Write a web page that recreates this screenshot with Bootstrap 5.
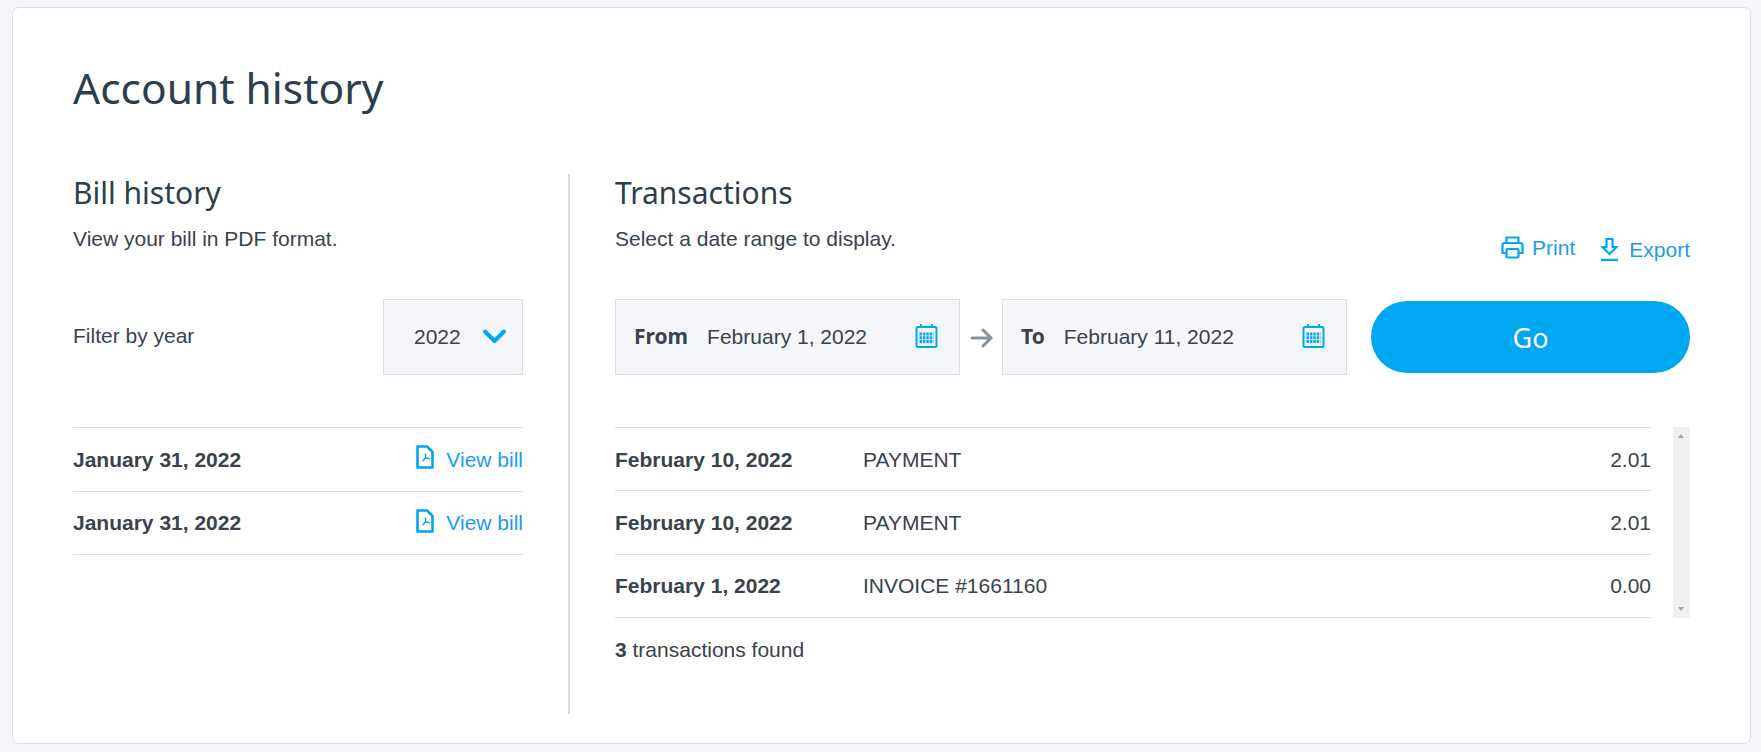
<!DOCTYPE html>
<html lang="en">
<head>
<meta charset="utf-8">
<title>Account history</title>
<link rel="stylesheet" href="https://cdn.jsdelivr.net/npm/bootstrap@5.3.0/dist/css/bootstrap.min.css">
<style>
html,body{height:100%}
body{background:#f3f7fa;font-family:"Liberation Sans",Arial,sans-serif;font-size:21px;line-height:31px;color:#38434d;overflow:hidden}
.shell{margin:7px 10px 9px 12px;height:737px;background:#fff;border:1px solid #d7e0e6;border-radius:7px;padding:0 60px}
.page-title{font-family:"Noto Sans",sans-serif;font-size:42.500px;font-weight:400;color:#2c3e4c;line-height:50px;margin:0;padding-top:55px;height:166px}
.sec-title{font-family:"Noto Sans",sans-serif;font-size:30px;font-weight:400;color:#2c3e4c;line-height:36px;margin:0;padding-top:1px;height:36px}
.sub-row{height:41px;padding-top:17px}
.sec-sub{line-height:24px;margin:0}
.cols{height:540px}
.left-col{width:450px;flex:none}
.divider{width:2px;flex:none;background:#d2dee3;margin:0 45px}
.right-col{flex:1 1 auto;min-width:0}
.filter-row{height:76px;margin-top:48px}
.box{background:#f3f7fa;border:1px solid #d7e0e6;height:76px;padding-bottom:2px}
.year-box{width:140px;padding-left:30px;gap:21px}
.rows{margin-top:52px}
.bill-row{height:63.5px;border-bottom:1px solid #d7e0e6}
.rows-top{border-top:1px solid #d7e0e6}
.lnk{color:#1d9bf0;text-decoration:none}
.date-b{font-weight:700}
.bill-lnk{gap:12px}
.bill-lnk svg{margin-top:-4px}
.tools{gap:26px;margin-top:5px}
.print-lnk{gap:8px}
.export-lnk{gap:11px;margin-top:2px}
.date-box{width:345px;padding:0 21px 2px 18px}
.lbl{font-family:"Noto Sans",sans-serif;font-weight:700;font-size:21px;margin-right:19px;color:#38434d}
.arrow{width:42px;flex:none;padding:2px 0 0 1px}
.go-btn{background:#00a7f1;color:#fff;border:0;border-radius:36px;width:319px;height:72px;font-family:"Noto Sans",sans-serif;font-size:27px;padding:2px 0 0}
.go-btn:hover{background:#00a7f1;color:#fff}
.filter-lbl{margin-top:-3px}
.tx-wrap{margin-top:52px;gap:22px}
.tx-list{flex:1 1 auto;min-width:0}
.tx-row{height:63.300px;border-bottom:1px solid #d7e0e6}
.tx-date{width:248px;font-weight:700}
.tx-desc{flex:1}
.scroll-track{width:17px;flex:none;height:191px;background:#f0f0f0;position:relative}
.scroll-up,.scroll-down{position:absolute;left:5px;width:0;height:0;border-left:3.5px solid transparent;border-right:3.5px solid transparent}
.scroll-up{top:7px;border-bottom:4px solid #a3a3a3}
.scroll-down{bottom:7px;border-top:4px solid #a3a3a3}
.found{margin-top:20px;line-height:24px}
</style>
</head>
<body>
<div class="shell">
  <h1 class="page-title">Account history</h1>
  <div class="cols d-flex">
    <div class="left-col">
      <h2 class="sec-title">Bill history</h2>
      <div class="sub-row"><p class="sec-sub">View your bill in PDF format.</p></div>
      <div class="filter-row d-flex align-items-center justify-content-between">
        <span class="filter-lbl">Filter by year</span>
        <div class="box year-box d-flex align-items-center">
          <span>2022</span>
          <svg width="25" height="17" viewBox="0 0 25 17" fill="none" stroke="#00a7f1" stroke-width="4" stroke-linecap="round" stroke-linejoin="round"><path d="M3 3.500l9.500 9.500 9.500-9.500"/></svg>
        </div>
      </div>
      <div class="rows rows-top">
        <div class="bill-row d-flex align-items-center justify-content-between">
          <span class="date-b">January 31, 2022</span>
          <a class="lnk bill-lnk d-flex align-items-center" href="#"><svg width="18" height="24" viewBox="0 0 18 24" fill="none" stroke="#00a7f1"><path stroke-width="2.6" stroke-linejoin="round" d="M1.500 1.500h9.500l5.500 5.500V22.500H1.500z"/><path stroke-width="1.400" d="M9.500 8.500v4.500M9.500 13l-3 3M9.500 13l4 .8"/></svg><span>View bill</span></a>
        </div>
        <div class="bill-row d-flex align-items-center justify-content-between">
          <span class="date-b">January 31, 2022</span>
          <a class="lnk bill-lnk d-flex align-items-center" href="#"><svg width="18" height="24" viewBox="0 0 18 24" fill="none" stroke="#00a7f1"><path stroke-width="2.6" stroke-linejoin="round" d="M1.500 1.500h9.500l5.500 5.500V22.500H1.500z"/><path stroke-width="1.400" d="M9.500 8.500v4.500M9.500 13l-3 3M9.500 13l4 .8"/></svg><span>View bill</span></a>
        </div>
      </div>
    </div>
    <div class="divider"></div>
    <div class="right-col">
      <h2 class="sec-title">Transactions</h2>
      <div class="sub-row d-flex justify-content-between align-items-start">
        <p class="sec-sub">Select a date range to display.</p>
        <div class="tools d-flex align-items-start">
          <a class="lnk print-lnk d-flex align-items-center" href="#"><svg width="23" height="23" viewBox="0 0 23 23" fill="none" stroke="#00a7f1" stroke-width="2.2"><path d="M5.500 7V1.500h12V7M5.500 17H1.500V9a2 2 0 0 1 2-2h16a2 2 0 0 1 2 2v8h-4"/><rect x="5.500" y="13" width="12" height="8.500" rx="1"/></svg><span>Print</span></a>
          <a class="lnk export-lnk d-flex align-items-center" href="#"><svg width="17" height="23" viewBox="0 0 17 23" fill="none" stroke="#00a7f1" stroke-width="2.200"><path d="M5.500 1h6v8h4l-7 7-7-7h4zM0 21.900h17"/></svg><span>Export</span></a>
        </div>
      </div>
      <div class="d-flex align-items-center filter-row justify-content-between">
        <div class="box date-box d-flex align-items-center justify-content-between">
          <span><span class="lbl">From</span>February 1, 2022</span>
          <svg width="23" height="24" viewBox="0 0 23 24" fill="none" stroke="#00a7f1" stroke-width="2"><rect x="1.500" y="3" width="20" height="20" rx="1.500"/><path d="M6 0v4M17 0v4"/><path stroke-width="3" stroke-dasharray="2.500 .9" d="M4.500 10h14M4.500 13.800h14M4.500 17.600h14"/></svg>
        </div>
        <div class="arrow d-flex justify-content-center"><svg width="24" height="20" viewBox="0 0 24 20" fill="none" stroke="#84949e" stroke-width="3" stroke-linecap="round"><path d="M2 10h19M13 2l8 8-8 8"/></svg></div>
        <div class="box date-box d-flex align-items-center justify-content-between me-auto">
          <span><span class="lbl">To</span>February 11, 2022</span>
          <svg width="23" height="24" viewBox="0 0 23 24" fill="none" stroke="#00a7f1" stroke-width="2"><rect x="1.500" y="3" width="20" height="20" rx="1.500"/><path d="M6 0v4M17 0v4"/><path stroke-width="3" stroke-dasharray="2.500 .9" d="M4.500 10h14M4.500 13.800h14M4.500 17.600h14"/></svg>
        </div>
        <button class="btn go-btn" type="button">Go</button>
      </div>
      <div class="tx-wrap d-flex">
        <div class="tx-list rows-top">
          <div class="tx-row d-flex align-items-center"><span class="tx-date">February 10, 2022</span><span class="tx-desc">PAYMENT</span><span>2.01</span></div>
          <div class="tx-row d-flex align-items-center"><span class="tx-date">February 10, 2022</span><span class="tx-desc">PAYMENT</span><span>2.01</span></div>
          <div class="tx-row d-flex align-items-center"><span class="tx-date">February 1, 2022</span><span class="tx-desc">INVOICE #1661160</span><span>0.00</span></div>
        </div>
        <div class="scroll-track"><span class="scroll-up"></span><span class="scroll-down"></span></div>
      </div>
      <p class="found"><b>3</b> transactions found</p>
    </div>
  </div>
</div>
<script src="https://cdn.jsdelivr.net/npm/bootstrap@5.3.0/dist/js/bootstrap.bundle.min.js"></script>
</body>
</html>
